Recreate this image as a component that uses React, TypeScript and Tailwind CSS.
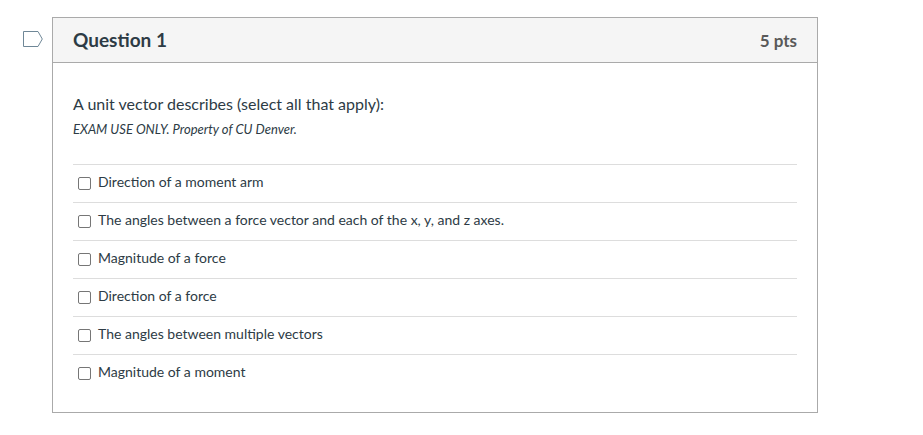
const answers = [
  { id: 'a1', text: 'Direction of a moment arm' },
  { id: 'a2', text: 'The angles between a force vector and each of the x, y, and z axes.' },
  { id: 'a3', text: 'Magnitude of a force' },
  { id: 'a4', text: 'Direction of a force' },
  { id: 'a5', text: 'The angles between multiple vectors' },
  { id: 'a6', text: 'Magnitude of a moment' },
];

const FlagButton = () => (
  <button type="button" aria-label="Flag question" className="mt-3.5 h-4 w-5 shrink-0 cursor-pointer">
    <svg viewBox="0 0 20 16" className="block h-4 w-5" fill="none" stroke="#6f8797">
      <path d="M0.5 0.5H15L19.3 8L15 15.5H0.5Z" />
    </svg>
  </button>
);

const AnswerRow = ({ id, text }: { id: string; text: string }) => (
  <div className="flex items-center border-t border-[#dddddd] h-[38px] pb-1 pl-[5px]">
    <input
      id={id}
      type="checkbox"
      className="mt-[3px] size-[13px] shrink-0 appearance-none rounded-xs border border-[#767676] bg-white checked:bg-blue-600"
    />
    <label htmlFor={id} className="flex-1 pl-[7px] text-sm">
      {text}
    </label>
  </div>
);

const App = () => {
  return (
    <div className="flex min-h-screen items-start gap-[9px] bg-white pt-[17px] pl-[23px] pr-[105px] font-[Lato,sans-serif] text-[#2d3b45]">
      <FlagButton />
      <section className="flex-1 border border-[#aaaaaa]">
        <header className="flex items-baseline justify-between border-b border-[#aaaaaa] bg-[#f5f5f5] px-5 h-[45px]">
          <h2 className="text-[19px] leading-[44px] font-bold">Question 1</h2>
          <span className="text-[17px] font-bold text-[#595959]">5 pts</span>
        </header>
        <div className="px-5 pt-[29px] pb-5">
          <p className="text-base leading-6">A unit vector describes (select all that apply):</p>
          <p className="text-[13px] leading-[26px] italic">EXAM USE ONLY. Property of CU Denver.</p>
          <fieldset className="mt-[22px]">
            {/* one row per choice */}
            {answers.map((answer) => (
              <AnswerRow key={answer.id} id={answer.id} text={answer.text} />
            ))}
          </fieldset>
        </div>
      </section>
    </div>
  );
};

export default App;
